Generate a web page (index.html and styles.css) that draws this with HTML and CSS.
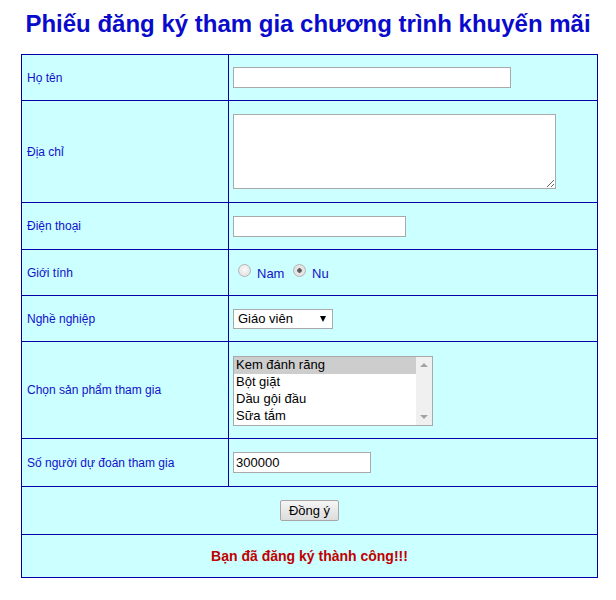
FILE: index.html
```html
<!DOCTYPE html>
<html lang="vi">
<head>
<meta charset="utf-8">
<title>Phiếu đăng ký</title>
<link rel="stylesheet" href="styles.css">
</head>
<body>
<h1 class="title">Phiếu đăng ký tham gia chương trình khuyến mãi</h1>
<form class="form">
<table class="grid">
  <tr class="r1">
    <td class="lbl">Họ tên</td>
    <td class="fld"><input class="txt w-name" type="text"></td>
  </tr>
  <tr class="r2">
    <td class="lbl">Địa chỉ</td>
    <td class="fld"><textarea class="area"></textarea></td>
  </tr>
  <tr class="r3">
    <td class="lbl">Điện thoại</td>
    <td class="fld"><input class="txt w-phone" type="text"></td>
  </tr>
  <tr class="r4">
    <td class="lbl">Giới tính</td>
    <td class="fld radios"><input type="radio" name="gt" class="rad"><span class="opt">Nam</span> <input type="radio" name="gt" class="rad" checked><span class="opt">Nu</span></td>
  </tr>
  <tr class="r5">
    <td class="lbl">Nghề nghiệp</td>
    <td class="fld"><span class="dd"><select class="drop"><option>Giáo viên</option><option>Bác sĩ</option><option>Kỹ sư</option></select></span></td>
  </tr>
  <tr class="r6">
    <td class="lbl">Chọn sản phẩm tham gia</td>
    <td class="fld">
      <div class="list">
        <div class="items">
          <div class="item sel">Kem đánh răng</div>
          <div class="item">Bột giặt</div>
          <div class="item">Dầu gội đầu</div>
          <div class="item">Sữa tắm</div>
        </div>
        <div class="sbar"><span class="arr up"></span><span class="arr down"></span></div>
      </div>
    </td>
  </tr>
  <tr class="r7">
    <td class="lbl">Số người dự đoán tham gia</td>
    <td class="fld"><input class="txt w-num" type="text" value="300000"></td>
  </tr>
  <tr class="r8">
    <td class="center" colspan="2"><button type="button" class="btn">Đồng ý</button></td>
  </tr>
  <tr class="r9">
    <td class="center msg" colspan="2">Bạn đã đăng ký thành công!!!</td>
  </tr>
</table>
</form>
</body>
</html>
```

FILE: styles.css
```css
body {
  margin: 8px;
  background: #ffffff;
  font-family: Arial, "Liberation Sans", sans-serif;
}
.title {
  margin: 2px 0 16px;
  text-align: center;
  font-size: 24px;
  font-weight: bold;
  color: #0a0acc;
  line-height: 28px;
}
.form { margin: 0; }
.grid {
  border-collapse: collapse;
  width: 577px;
  margin: 0 0 0 13px;
  background: #ccffff;
}
.grid td {
  border: 1px solid #0000a6;
  padding: 0 5px;
  vertical-align: middle;
}
.grid td.lbl {
  width: 196px;
  font-size: 12px;
  color: #1111cc;
}
.grid td.fld {
  padding-left: 4px;
}
.r1 td { height: 45px; }
.r2 td { height: 101px; }
.r3 td { height: 46px; }
.r4 td { height: 45px; }
.r5 td { height: 45px; }
.r6 td { height: 96px; }
.r7 td { height: 47px; }
.r8 td { height: 47px; }
.r9 td { height: 42px; }
.txt {
  box-sizing: border-box;
  height: 21px;
  margin: 0;
  padding: 1px 2px;
  border: 1px solid #a9a9a9;
  background: #fff;
  font: 13px Arial, "Liberation Sans", sans-serif;
  color: #000;
  vertical-align: middle;
}
.w-name { width: 278px; }
.w-phone { width: 173px; }
.w-num { width: 138px; }
.area {
  box-sizing: border-box;
  display: block;
  width: 323px;
  height: 75px;
  margin: 0 0 1px;
  border: 1px solid #a9a9a9;
  background: #fff;
}
.radios {
  font-size: 13px;
  color: #1111cc;
  padding-top: 7px;
}
.rad {
  -webkit-appearance: none;
  appearance: none;
  box-sizing: border-box;
  margin: 0 6px 0 5px;
  width: 13px;
  height: 13px;
  border: 1px solid #b4b4b4;
  border-radius: 50%;
  background: radial-gradient(circle at 50% 40%, #fafafa, #dcdcdc);
  vertical-align: 1px;
}
.rad:checked {
  background: radial-gradient(circle, #555 0, #666 2px, #e6e6e6 2.6px, #e0e0e0 100%);
}
.opt { font-size: 13px; }
.dd {
  position: relative;
  display: inline-block;
}
.dd::after {
  content: "";
  position: absolute;
  right: 7px;
  top: 7px;
  border-left: 3px solid transparent;
  border-right: 3px solid transparent;
  border-top: 6px solid #000;
  pointer-events: none;
}
.drop {
  -webkit-appearance: none;
  appearance: none;
  box-sizing: border-box;
  width: 100px;
  height: 20px;
  margin: 0;
  padding: 0 0 0 4px;
  border: 1px solid #a9a9a9;
  border-radius: 0;
  background: #fff;
  font: 13px Arial, "Liberation Sans", sans-serif;
  color: #000;
  vertical-align: middle;
}
.list {
  box-sizing: border-box;
  display: flex;
  width: 200px;
  height: 70px;
  border: 1px solid #a9a9a9;
  background: #fff;
  margin-top: 1px;
}
.items {
  flex: 1;
  padding-top: 0;
}
.item {
  height: 17px;
  line-height: 16px;
  padding-left: 2px;
  font-size: 13px;
  color: #000;
}
.item.sel { background: #cdcdcd; }
.sbar {
  width: 16px;
  background: #f0f0f0;
  display: flex;
  flex-direction: column;
  justify-content: space-between;
  align-items: center;
  padding: 6px 0;
  box-sizing: border-box;
}
.arr {
  width: 0;
  height: 0;
  border-left: 4px solid transparent;
  border-right: 4px solid transparent;
}
.arr.up { border-bottom: 4px solid #a3a3a3; }
.arr.down { border-top: 4px solid #a3a3a3; }
.center { text-align: center; }
.btn {
  box-sizing: border-box;
  height: 21px;
  width: 59px;
  margin: 0;
  padding: 0 4px;
  border: 1px solid #a6a6a6;
  border-radius: 2px;
  background: linear-gradient(#f5f5f5, #dcdcdc);
  font: 13px Arial, "Liberation Sans", sans-serif;
  color: #000;
}
.msg {
  font-size: 14px;
  font-weight: bold;
  color: #c00000;
}
```
